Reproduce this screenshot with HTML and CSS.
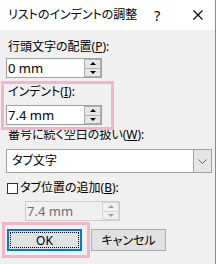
FILE: index.html
```html
<!DOCTYPE html>
<html lang="ja">
<head>
<meta charset="utf-8">
<link rel="stylesheet" href="styles.css">
</head>
<body>
<div class="window">
  <div class="titlebar">
    <span class="title">リストのインデントの調整</span>
    <span class="tbtn help">?</span>
    <span class="tbtn close"><svg width="10" height="10" viewBox="0 0 10 10"><path d="M0.5 0.5 L9.5 9.5 M9.5 0.5 L0.5 9.5" stroke="#000" stroke-width="1.1" fill="none"/></svg></span>
  </div>
  <div class="content">
    <div class="label">行頭文字の配置(<u>P</u>):</div>
    <div class="spin"><span class="val">0 mm</span><span class="arrows"><span class="arr"><span class="tri up"></span></span><span class="arr"><span class="tri down"></span></span></span></div>
    <div class="group">
      <div class="label">インデント(<u>I</u>):</div>
      <div class="spin"><span class="val">7.4 mm</span><span class="arrows"><span class="arr"><span class="tri up"></span></span><span class="arr"><span class="tri down"></span></span></span></div>
    </div>
    <div class="label">番号に続く空白の扱い(<u>W</u>):</div>
    <div class="combo"><span class="val">タブ文字</span><span class="drop"><svg width="9" height="5" viewBox="0 0 9 5"><path d="M0.5 0.5 L4.5 4.5 L8.5 0.5" stroke="#606060" stroke-width="1" fill="none"/></svg></span></div>
    <div class="check"><span class="box"></span><span>タブ位置の追加(<u>B</u>):</span></div>
    <div class="spin disabled"><span class="val">7.4 mm</span><span class="arrows"><span class="arr"><span class="tri up"></span></span><span class="arr"><span class="tri down"></span></span></span></div>
    <div class="buttons">
      <div class="focusgroup"><button class="btn default">OK</button></div>
      <button class="btn">キャンセル</button>
    </div>
  </div>
</div>
</body>
</html>
```
FILE: styles.css
```css
* { box-sizing: border-box; margin: 0; padding: 0; }
body {
  margin: 0;
  background: #fff;
  font-family: "Noto Sans", "Noto Sans CJK JP", sans-serif;
  font-size: 12px;
  color: #000;
  font-feature-settings: "palt";
}
.window {
  width: 216px;
  height: 264px;
  background: #f0f0f0;
  border-right: 1px solid #8a8a8a;
}
.titlebar {
  height: 30px;
  background: #fff;
  display: flex;
  align-items: center;
  padding-left: 8px;
}
.title { flex: 1; line-height: 16px; white-space: nowrap; }
.tbtn { display: flex; align-items: center; justify-content: center; height: 30px; }
.help { width: 46px; font-size: 14px; }
.close { width: 43px; padding-left: 3px; }
.content { padding: 9px 3px 0 6px; }
.label { line-height: 16px; padding-left: 2px; white-space: nowrap; }
.spin {
  margin-top: 3px;
  width: 96px;
  height: 20px;
  border: 1px solid #a0a0a0;
  background: #fff;
  display: flex;
}
.val { flex: 1; padding-left: 1px; line-height: 18px; white-space: nowrap; font-size: 13px; }
.arrows { width: 17px; display: flex; flex-direction: column; }
.arr {
  flex: 1;
  background: #e6e6e6;
  border: 1px solid #b0b0b0;
  display: flex;
  align-items: center;
  justify-content: center;
}
.arr + .arr { border-top: none; }
.tri { width: 0; height: 0; border-left: 3px solid transparent; border-right: 3px solid transparent; }
.tri.up { border-bottom: 3px solid #000; }
.tri.down { border-top: 3px solid #000; }
.group {
  margin-top: 6px;
  margin-left: -2px;
  width: 107px;
  padding: 0 0 2px 2px;
  outline: 3px solid #f4b5ca;
}
.group .spin { margin-top: 5px; }
.combo {
  margin-top: 6px;
  width: 206px;
  height: 24px;
  border: 1px solid #a0a0a0;
  background: #fff;
  display: flex;
}
.combo .val { padding-left: 5px; line-height: 22px; font-size: 12px; }
.drop {
  width: 18px;
  background: #e5e5e5;
  border-left: 1px solid #a0a0a0;
  display: flex;
  align-items: center;
  justify-content: center;
}
.check {
  margin-top: 7px;
  display: flex;
  align-items: center;
  line-height: 16px;
}
.box {
  width: 11px;
  height: 11px;
  margin-left: 1px;
  margin-right: 2px;
  background: #fff;
  border: 1px solid #333;
}
.spin.disabled {
  margin-top: 5px;
  margin-left: 19px;
  width: 95px;
  background: #f0f0f0;
  border-color: #cccccc;
  color: #6d6d6d;
}
.spin.disabled .arr { background: #f0f0f0; border-color: #d5d5d5; }
.spin.disabled .tri.up { border-bottom-color: #a0a0a0; }
.spin.disabled .tri.down { border-top-color: #a0a0a0; }
.buttons {
  margin-top: 4px;
  margin-left: -1px;
  display: flex;
  align-items: center;
  gap: 4px;
}
.focusgroup {
  padding: 4px 5px 4px 2px;
  outline: 3px solid #f4b5ca;
}
.btn {
  width: 75px;
  height: 22px;
  background: #e1e1e1;
  border: 1px solid #adadad;
  font-family: inherit;
  font-size: 12px;
  color: #000;
  font-feature-settings: "palt";
}
.btn.default {
  border: 2px solid #0078d7;
  position: relative;
}
.btn.default::after {
  content: "";
  position: absolute;
  inset: 1px;
  border: 1px dotted #000;
}
```
